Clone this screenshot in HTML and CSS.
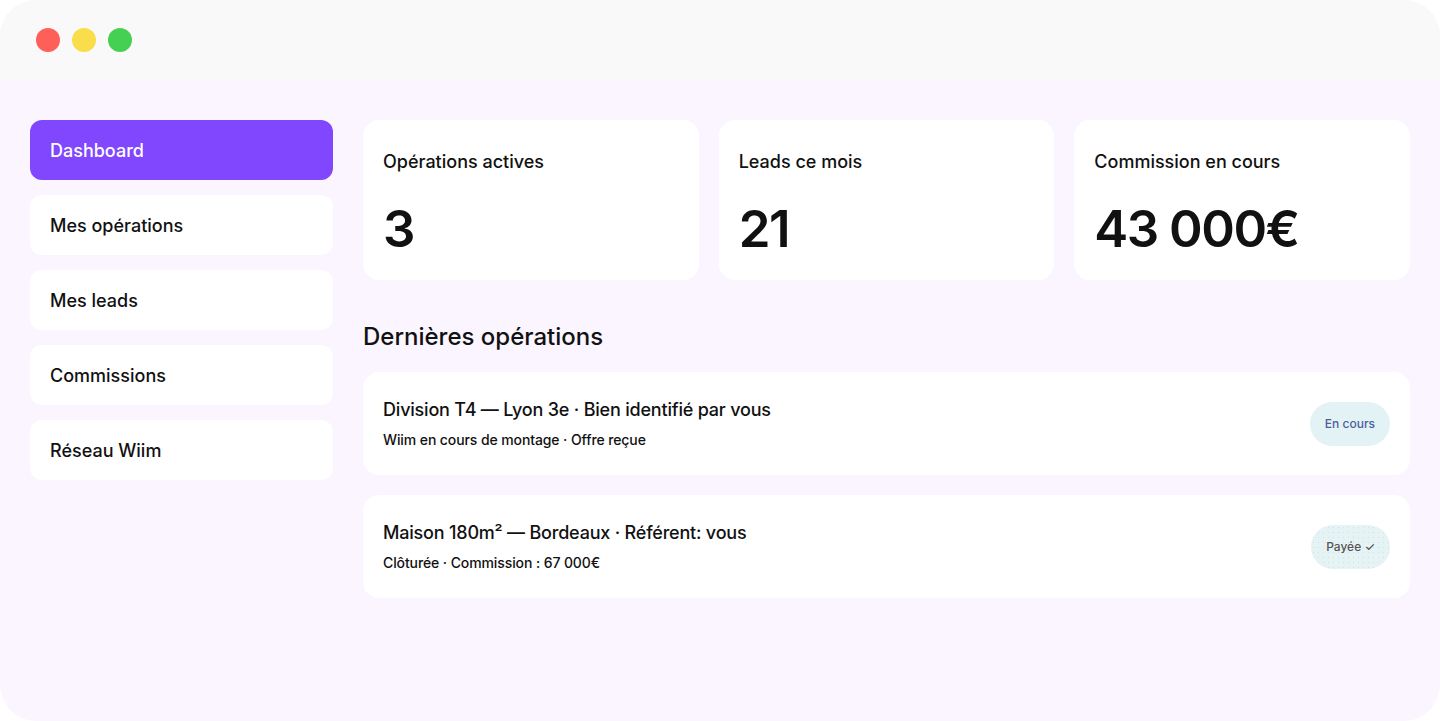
FILE: index.html
```html
<!DOCTYPE html>
<html lang="fr">
<head>
  <meta charset="UTF-8" />
  <meta name="viewport" content="width=device-width, initial-scale=1.0" />
  <title>Wiim — Dashboard</title>
  <link rel="stylesheet" href="styles.css">
</head>
<body>
  <div class="window">
    <div class="titlebar">
      <span class="dot red"></span>
      <span class="dot yellow"></span>
      <span class="dot green"></span>
    </div>

    <div class="content">
      <nav class="sidebar">
        <div class="nav-item active">Dashboard</div>
        <div class="nav-item">Mes opérations</div>
        <div class="nav-item">Mes leads</div>
        <div class="nav-item">Commissions</div>
        <div class="nav-item">Réseau Wiim</div>
      </nav>

      <main class="main">
        <div class="stats">
          <div class="stat">
            <div class="stat-label">Opérations actives</div>
            <div class="stat-value">3</div>
          </div>
          <div class="stat">
            <div class="stat-label">Leads ce mois</div>
            <div class="stat-value">21</div>
          </div>
          <div class="stat">
            <div class="stat-label">Commission en cours</div>
            <div class="stat-value">43 000€</div>
          </div>
        </div>

        <h2 class="section-title">Dernières opérations</h2>

        <div class="op-list">
          <div class="op">
            <div class="op-text">
              <div class="op-title">Division T4 — Lyon 3e · Bien identifié par vous</div>
              <div class="op-sub">Wiim en cours de montage · Offre reçue</div>
            </div>
            <span class="badge progress">En cours</span>
          </div>
          <div class="op">
            <div class="op-text">
              <div class="op-title">Maison 180m² — Bordeaux · Référent: vous</div>
              <div class="op-sub">Clôturée · Commission : 67 000€</div>
            </div>
            <span class="badge paid">Payée ✓</span>
          </div>
        </div>
      </main>
    </div>
  </div>
</body>
</html>
```

FILE: styles.css
```css
html, body {
  margin: 0;
  background: #ffffff;
}
body {
  font-family: Inter, 'Noto Sans', sans-serif;
  color: #111111;
}
.window {
  height: 721px;
  border-radius: 36px;
  overflow: hidden;
  background: #faf5ff;
  display: flex;
  flex-direction: column;
}
.titlebar {
  height: 80px;
  flex-shrink: 0;
  background: #f9f9f9;
  display: flex;
  align-items: center;
  gap: 12px;
  padding-left: 36px;
}
.dot {
  width: 24px;
  height: 24px;
  border-radius: 50%;
}
.dot.red { background: #fe5f58; }
.dot.yellow { background: #fadd4a; }
.dot.green { background: #46d053; }

.content {
  display: flex;
  gap: 30px;
  padding: 40px 30px;
}
.sidebar {
  width: 303px;
  flex-shrink: 0;
  display: flex;
  flex-direction: column;
  gap: 15px;
}
.nav-item {
  height: 60px;
  display: flex;
  align-items: center;
  padding-left: 20px;
  background: #ffffff;
  border-radius: 12px;
  font-size: 18px;
  font-weight: 500;
}
.nav-item.active {
  background: #8047ff;
  color: #ffffff;
}

.main {
  flex: 1;
  display: flex;
  flex-direction: column;
}
.stats {
  display: grid;
  grid-template-columns: repeat(3, 1fr);
  gap: 20px;
}
.stat {
  height: 160px;
  box-sizing: border-box;
  background: #ffffff;
  border-radius: 16px;
  padding: 28px 20px 20px;
}
.stat-label {
  font-size: 18px;
  line-height: 27px;
  font-weight: 500;
}
.stat-value {
  margin-top: 23px;
  font-size: 51px;
  line-height: 62px;
  font-weight: 600;
  letter-spacing: -1.5px;
}
.section-title {
  margin: 41px 0 20px;
  font-size: 24px;
  line-height: 31px;
  font-weight: 500;
}
.op-list {
  display: flex;
  flex-direction: column;
  gap: 20px;
}
.op {
  height: 103px;
  box-sizing: border-box;
  background: #ffffff;
  border-radius: 16px;
  padding: 0 20px;
  display: flex;
  align-items: center;
  justify-content: space-between;
}
.op-text {
  padding-bottom: 1px;
}
.op-title {
  font-size: 18px;
  line-height: 25px;
  font-weight: 500;
  letter-spacing: -0.2px;
}
.op-sub {
  margin-top: 8px;
  font-size: 14px;
  line-height: 20px;
  font-weight: 500;
  letter-spacing: -0.1px;
}
.badge {
  height: 44px;
  display: flex;
  align-items: center;
  padding: 0 15px;
  border-radius: 22px;
  font-size: 12px;
  font-weight: 500;
}
.badge.progress {
  background: #e3f2f4;
  color: #4b5f9e;
}
.badge.paid {
  background-color: #e6f3f4;
  background-image: radial-gradient(#cfe3e6 0.8px, transparent 0.9px);
  background-size: 5px 5px;
  color: #555555;
}
```
